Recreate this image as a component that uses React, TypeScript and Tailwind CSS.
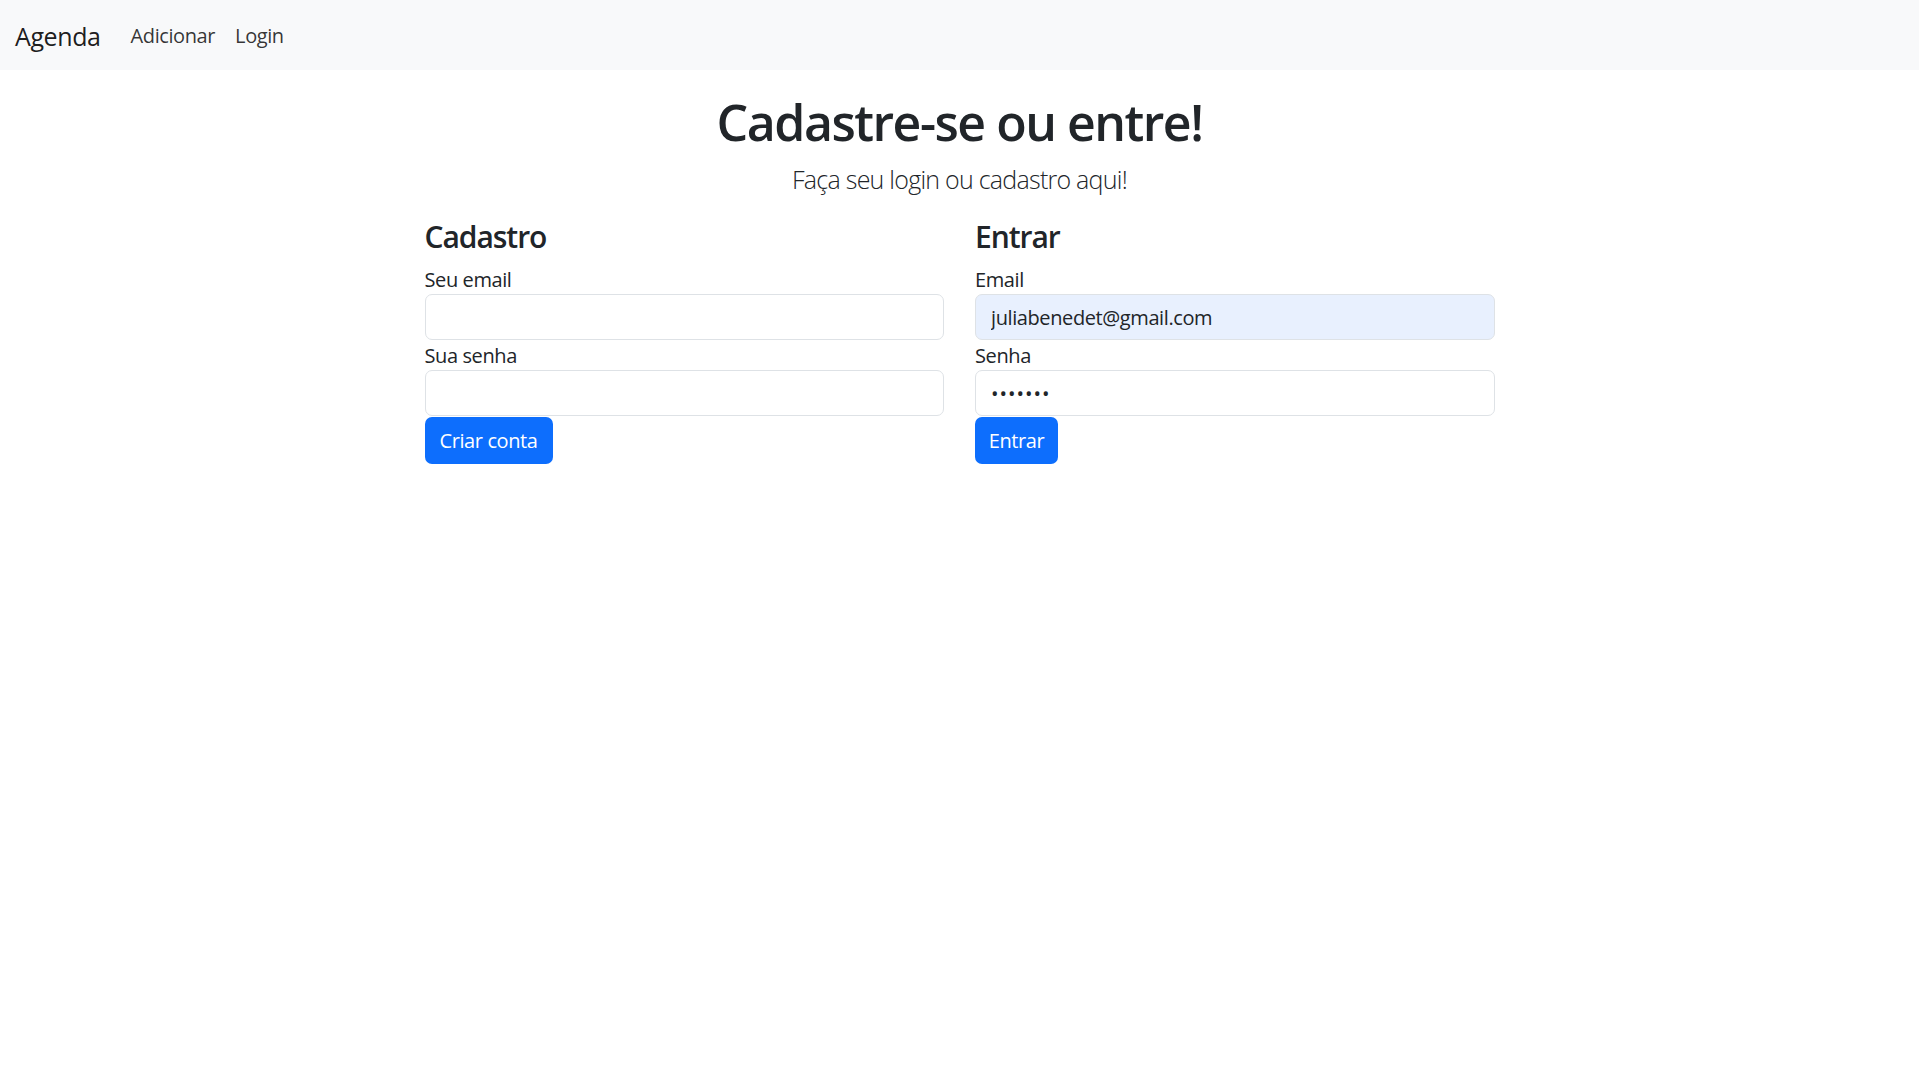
import React from "react";

const Field: React.FC<{ label: string; type?: string; value?: string; autofill?: boolean }> = ({
  label,
  type = "text",
  value = "",
  autofill = false,
}) => {
  return (
    <div className="flex flex-col">
      <label className="pt-[2px] text-[20px] leading-[28px]">{label}</label>
      <input
        type={type}
        defaultValue={value}
        readOnly
        className={`h-[46px] w-full rounded-[7px] border border-[#dee2e6] px-[15px] pt-[2px] text-[20px] text-[#212529] outline-none ${
          autofill ? "bg-[#e8f0fe]" : "bg-white"
        } ${type === "password" ? "tracking-[0.05em]" : ""}`}
      />
    </div>
  );
};

export default function App() {
  return (
    <div className="min-h-screen bg-white font-['Open_Sans',sans-serif] tracking-[-0.025em] text-[#212529]">
      {/* Navbar */}
      <nav className="flex h-[70px] items-center bg-[#f8f9fa] px-[15px] pt-[2px]">
        <span className="mr-[20px] text-[25px] leading-[37px] text-black/90">Agenda</span>
        <a className="px-[10px] text-[20px] text-black/80">Adicionar</a>
        <a className="px-[10px] text-[20px] text-black/80">Login</a>
      </nav>

      <main className="mx-auto w-[1070px]">
        <div className="text-center">
          <h1 className="mt-[22px] mb-[9px] text-[50px] leading-[60px] font-semibold tracking-[-0.03em]">
            Cadastre-se ou entre!
          </h1>
          <p className="mb-[20px] text-[25px] leading-[37.5px] font-light tracking-[-0.03em]">
            Faça seu login ou cadastro aqui!
          </p>
        </div>

        <div className="grid grid-cols-2 gap-x-[31px]">
          {/* Cadastro */}
          <form className="flex flex-col">
            <h4 className="mb-[9px] text-[30px] leading-[36px] font-semibold tracking-[-0.035em]">Cadastro</h4>
            <Field label="Seu email" type="email" />
            <Field label="Sua senha" type="password" />
            <div className="pt-[1px]">
              <button
                type="button"
                className="h-[47px] w-[128px] rounded-[7px] bg-[#0d6efd] pt-[2px] text-[20px] text-white"
              >
                Criar conta
              </button>
            </div>
          </form>

          {/* Entrar */}
          <form className="flex flex-col">
            <h4 className="mb-[9px] text-[30px] leading-[36px] font-semibold tracking-[-0.035em]">Entrar</h4>
            <Field label="Email" type="email" value="juliabenedet@gmail.com" autofill />
            <Field label="Senha" type="password" value="1234567" />
            <div className="pt-[1px]">
              <button
                type="button"
                className="h-[47px] w-[83px] rounded-[7px] bg-[#0d6efd] pt-[2px] text-[20px] text-white"
              >
                Entrar
              </button>
            </div>
          </form>
        </div>
      </main>
    </div>
  );
}
